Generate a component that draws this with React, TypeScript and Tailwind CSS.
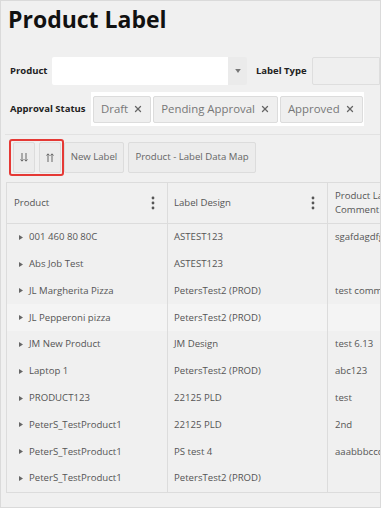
import { X } from "lucide-react";

const rows = [
  ["001 460 80 80C", "ASTEST123", "sgafdagdfgdfg"],
  ["Abs Job Test", "ASTEST123", ""],
  ["JL Margherita Pizza", "PetersTest2 (PROD)", "test comment"],
  ["JL Pepperoni pizza", "PetersTest2 (PROD)", ""],
  ["JM New Product", "JM Design", "test 6.13"],
  ["Laptop 1", "PetersTest2 (PROD)", "abc123"],
  ["PRODUCT123", "22125 PLD", "test"],
  ["PeterS_TestProduct1", "22125 PLD", "2nd"],
  ["PeterS_TestProduct1", "PS test 4", "aaabbbccc"],
  ["PeterS_TestProduct1", "PetersTest2 (PROD)", ""],
];

const Kebab = () => (
  <svg width="4" height="14" viewBox="0 0 4 14" className="shrink-0">
    <circle cx="2" cy="2" r="1.4" fill="#555" />
    <circle cx="2" cy="7" r="1.4" fill="#555" />
    <circle cx="2" cy="12" r="1.4" fill="#555" />
  </svg>
);

const Tag = ({ label }: { label: string }) => (
  <div className="flex items-center gap-[5px] h-[27px] pl-[7px] pr-[7px] bg-[#efefef] border border-[#dcdcdc] rounded-[2px] text-[11.4px] text-[#777] whitespace-nowrap">
    <span>{label}</span>
    <X size={10} strokeWidth={3} className="text-[#666]" />
  </div>
);

const App = () => {
  return (
    <div
      className="w-[381px] h-[508px] overflow-hidden bg-[#f0f0f0] border border-[#dadada] text-[#333]"
      style={{ fontFamily: '"Open Sans", sans-serif' }}
    >
      <h1 className="pl-[7px] pt-[2px] text-[23px] font-bold leading-[32px] text-[#111]">Product Label</h1>

      <div className="flex items-center mt-[21px] h-[30px]">
        <span className="pl-[9px] w-[50px] text-[9.5px] font-bold text-[#222]">Product</span>
        <div className="flex h-[28px] ml-[1px] rounded-[2px] overflow-hidden">
          <div className="w-[176px] bg-white" />
          <div className="w-[19px] bg-[#ebebeb] flex items-center justify-center">
            <svg width="6" height="4" viewBox="0 0 7 5">
              <path d="M0 0 L7 0 L3.5 5 Z" fill="#777" />
            </svg>
          </div>
        </div>
        <span className="ml-[9px] text-[9.5px] font-bold text-[#222]">Label Type</span>
        <div className="ml-[5px] flex-1 h-[28px] border border-[#dedede] rounded-l-[2px] bg-[#efefef]" />
      </div>

      <div className="flex items-center mt-[6px] h-[34px]">
        <span className="pl-[9px] w-[90px] text-[9.5px] font-bold text-[#222] whitespace-nowrap">Approval Status</span>
        <div className="flex items-center gap-[2px] bg-white h-[34px] w-[273px] px-[2px]">
          <Tag label="Draft" />
          <Tag label="Pending Approval" />
          <Tag label="Approved" />
        </div>
      </div>

      <div className="ml-[4px] mt-[8px] border-t border-[#e2e2e2]" />

      <div className="flex items-center mt-[6px] pl-[10px] text-[9.6px] text-[#666] whitespace-nowrap">
        <div className="flex gap-[4px] outline-2 outline-[#e53935] py-[1px] pl-[2px] pr-[1px] rounded-[1px]">
          <button className="w-[22px] h-[31px] bg-[#ececec] border border-[#dcdcdc] rounded-[2px] flex items-center justify-center">
            <svg width="8" height="9" viewBox="0 0 8 9" fill="none" stroke="#666" strokeWidth="1">
              <path d="M2 0 V8 M0.5 6.5 L2 8.2 L3.5 6.5 M6 0 V8 M4.5 6.5 L6 8.2 L7.5 6.5" />
            </svg>
          </button>
          <button className="w-[22px] h-[31px] bg-[#ececec] border border-[#dcdcdc] rounded-[2px] flex items-center justify-center">
            <svg width="8" height="9" viewBox="0 0 8 9" fill="none" stroke="#666" strokeWidth="1">
              <path d="M2 9 V1 M0.5 2.5 L2 0.8 L3.5 2.5 M6 9 V1 M4.5 2.5 L6 0.8 L7.5 2.5" />
            </svg>
          </button>
        </div>
        <button className="ml-[2px] w-[60px] h-[31px] bg-[#ececec] border border-[#dcdcdc] rounded-[2px]">New Label</button>
        <button className="ml-[4px] w-[128px] h-[31px] bg-[#ececec] border border-[#dcdcdc] rounded-[2px]">Product - Label Data Map</button>
      </div>

      <div className="ml-[5px] mt-[8px] border border-r-0 border-[#dcdcdc] text-[9.6px] text-[#555]">
        <div className="grid grid-cols-[161px_160px_1fr] h-[41px] border-b border-[#dcdcdc]">
          <div className="flex items-center justify-between pl-[7px] pr-[12px] border-r border-[#dcdcdc]">
            <span>Product</span>
            <Kebab />
          </div>
          <div className="flex items-center justify-between pl-[6px] pr-[12px] border-r border-[#dcdcdc]">
            <span>Label Design</span>
            <Kebab />
          </div>
          <div className="flex items-center pl-[7px] leading-[14px] whitespace-nowrap overflow-hidden">
            <span>Product Label<br />Comment</span>
          </div>
        </div>
        {rows.map((r, i) => (
          <div
            key={i}
            className={`grid grid-cols-[161px_160px_1fr] h-[26.8px] ${i === 3 ? "bg-[#f4f4f4]" : ""}`}
          >
            <div className="flex items-center pl-[12px] border-r border-[#dcdcdc] whitespace-nowrap">
              <svg width="4" height="5" viewBox="0 0 4 5" className="mr-[6px]">
                <path d="M0 0 L4 2.5 L0 5 Z" fill="#666" />
              </svg>
              {r[0]}
            </div>
            <div className="flex items-center pl-[6px] border-r border-[#dcdcdc] whitespace-nowrap">{r[1]}</div>
            <div className="flex items-center pl-[7px] whitespace-nowrap overflow-hidden">{r[2]}</div>
          </div>
        ))}
      </div>
    </div>
  );
};

export default App;
